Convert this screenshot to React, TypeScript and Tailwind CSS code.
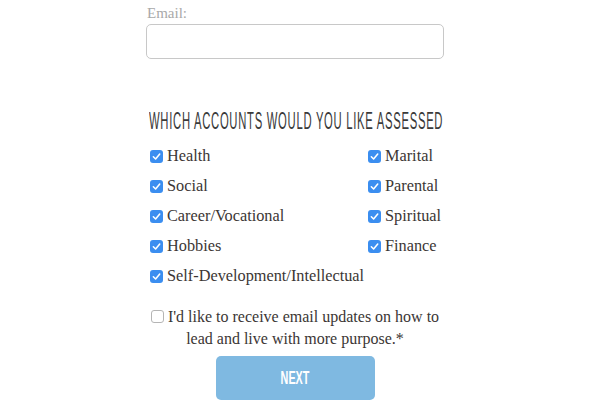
const serif = { fontFamily: '"Liberation Serif", "Times New Roman", serif' };

function Check({ checked }: { checked: boolean }) {
  if (!checked) {
    return (
      <span className="inline-block w-[13px] h-[13px] shrink-0 rounded-[3px] border border-[#b5b5b5] bg-white align-[-1px]" />
    );
  }
  return (
    <span className="inline-flex w-[13px] h-[13px] shrink-0 items-center justify-center rounded-[3px] bg-[#3b8ef0]">
      <svg width="9" height="9" viewBox="0 0 10 10" fill="none">
        <path d="M1.5 5.3 L4 7.8 L8.6 2.2" stroke="white" strokeWidth="1.7" strokeLinecap="round" strokeLinejoin="round" />
      </svg>
    </span>
  );
}

export default function App() {
  const left = ["Health", "Social", "Career/Vocational", "Hobbies", "Self-Development/Intellectual"];
  const right = ["Marital", "Parental", "Spiritual", "Finance"];

  return (
    <div className="w-full h-[410px] bg-white overflow-hidden font-['Liberation_Serif',serif]">
      <div className="ml-[146px] w-[298px]">
        <label className="block mt-[3px] text-[15px] leading-5 text-[#a9a9a9] pl-px">Email:</label>
        <input className="block mt-px h-[35px] w-[298px] rounded-[5px] border border-[#c8c8c8] bg-white outline-none" />

        <h2 className="mt-[47px] h-[30px] leading-[30px] text-[#3a3a3a] pl-[3px] whitespace-nowrap">
          <span className="inline-block origin-left scale-x-[0.47] text-[24px] tracking-[1.5px] font-['Liberation_Sans',sans-serif]">
            WHICH ACCOUNTS WOULD YOU LIKE ASSESSED
          </span>
        </h2>

        <div className="mt-[5px] flex pl-[4px] text-[16.3px] text-[#3b3634]">
          <div className="flex flex-col w-[218px]">
            {left.map((item) => (
              <div key={item} className="h-[30px] flex items-center gap-[4px]">
                <Check checked />
                <span className="whitespace-nowrap">{item}</span>
              </div>
            ))}
          </div>
          <div className="flex flex-col">
            {right.map((item) => (
              <div key={item} className="h-[30px] flex items-center gap-[4px]">
                <Check checked />
                <span>{item}</span>
              </div>
            ))}
          </div>
        </div>

        <p className="mt-[15px] text-center text-[16px] leading-[22px] text-[#3b3634]" style={serif}>
          <Check checked={false} /> I'd like to receive email updates on how to lead and live with more purpose.*
        </p>

        <button className="block mx-auto mt-[6px] w-[159px] h-[44px] rounded-[5px] bg-[#7fb9e1] text-white">
          <span className="inline-block scale-x-[0.6] text-[18px] font-bold font-['Liberation_Sans',sans-serif]">NEXT</span>
        </button>
      </div>
    </div>
  );
}
